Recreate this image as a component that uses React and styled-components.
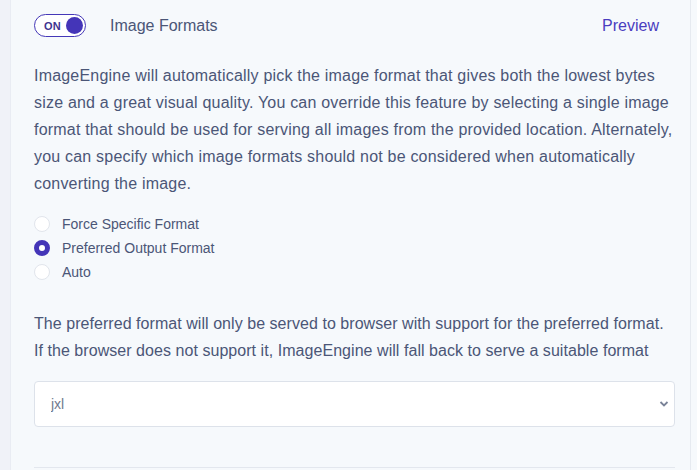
import React, { useState } from 'react';
import styled, { createGlobalStyle } from 'styled-components';

const GlobalStyle = createGlobalStyle`
  html, body {
    margin: 0;
    padding: 0;
    background: #f6f9fc;
    font-family: "Helvetica Neue", "Liberation Sans", Arial, sans-serif;
    -webkit-font-smoothing: antialiased;
  }
`;

const Page = styled.div`
  display: flex;
  min-height: 470px;
  background: #f6f9fc;
`;

const Rail = styled.div`
  width: 10px;
  flex-shrink: 0;
  background: #f0f2f8;
  border-right: 1px solid #e9ecf3;
`;

const Panel = styled.div`
  width: 680px;
  flex-shrink: 0;
  box-sizing: border-box;
  padding: 14px 15px 0 23px;
  border-right: 1px solid #e6eaf0;
  background: #f6f9fc;
`;

const Header = styled.div`
  display: flex;
  align-items: center;
  height: 23px;
`;

const Toggle = styled.button`
  display: flex;
  align-items: center;
  justify-content: space-between;
  box-sizing: border-box;
  width: 52px;
  height: 23px;
  padding: 0 2px 0 9px;
  border: 1.5px solid #4538b8;
  border-radius: 12px;
  background: #ffffff;
  cursor: pointer;
`;

const ToggleLabel = styled.span`
  font-size: 11px;
  font-weight: 700;
  color: #3d3490;
  letter-spacing: 0.2px;
`;

const Knob = styled.span`
  width: 17px;
  height: 17px;
  border-radius: 50%;
  background: #4435b8;
`;

const Title = styled.span`
  margin-left: 24px;
  font-size: 16px;
  color: #4b5677;
`;

const PreviewLink = styled.a`
  margin-left: auto;
  margin-right: 16px;
  font-size: 16px;
  color: #4a3dbf;
  text-decoration: none;
  cursor: pointer;
`;

const Paragraph = styled.p`
  margin: ${(p) => p.$top || 0}px 0 0 0;
  font-size: 16px;
  line-height: 27px;
  letter-spacing: ${(p) => p.$spacing ?? 0.2}px;
  color: #4b5677;
  white-space: nowrap;
`;

const RadioGroup = styled.div`
  display: flex;
  flex-direction: column;
  gap: 8px;
  margin-top: 19.5px;
`;

const RadioRow = styled.label`
  display: flex;
  align-items: center;
  gap: 12px;
  height: 16px;
  font-size: 14px;
  color: #4b5677;
  cursor: pointer;
`;

const RadioDot = styled.span`
  box-sizing: border-box;
  width: 16px;
  height: 16px;
  border-radius: 50%;
  background: #ffffff;
  border: ${(p) => (p.$checked ? '5px solid #4435b8' : '1px solid #e1e5ec')};
`;

const SelectWrap = styled.div`
  position: relative;
  margin-top: 17.5px;
`;

const Select = styled.select`
  appearance: none;
  width: 100%;
  height: 46px;
  box-sizing: border-box;
  padding: 0 30px 0 16px;
  border: 1px solid #dde2ea;
  border-radius: 4px;
  background: #ffffff;
  font-family: "Helvetica Neue", "Liberation Sans", Arial, sans-serif;
  font-size: 14px;
  color: #707a8e;
  outline: none;
`;

const Chevron = styled.svg`
  position: absolute;
  right: 6px;
  top: 19px;
  pointer-events: none;
`;

const Divider = styled.hr`
  margin: 40px 0 0 0;
  border: none;
  border-top: 1px solid #e3e7ee;
`;

const options = ['Force Specific Format', 'Preferred Output Format', 'Auto'];

export default function App() {
  const [selected, setSelected] = useState(1);
  return (
    <>
      <GlobalStyle />
      <Page>
        <Rail />
        <Panel>
          <Header>
            <Toggle>
              <ToggleLabel>ON</ToggleLabel>
              <Knob />
            </Toggle>
            <Title>Image Formats</Title>
            <PreviewLink>Preview</PreviewLink>
          </Header>
          <Paragraph $top={24.5}>
            ImageEngine will automatically pick the image format that gives both the lowest bytes
            <br />
            size and a great visual quality. You can override this feature by selecting a single image
            <br />
            format that should be used for serving all images from the provided location. Alternately,
            <br />
            you can specify which image formats should not be considered when automatically
            <br />
            converting the image.
          </Paragraph>
          <RadioGroup>
            {options.map((o, i) => (
              <RadioRow key={o} onClick={() => setSelected(i)}>
                <RadioDot $checked={selected === i} />
                {o}
              </RadioRow>
            ))}
          </RadioGroup>
          <Paragraph $top={29.5} $spacing={0.05}>
            The preferred format will only be served to browser with support for the preferred format.
            <br />
            If the browser does not support it, ImageEngine will fall back to serve a suitable format
          </Paragraph>
          <SelectWrap>
            <Select defaultValue="jxl">
              <option value="jxl">jxl</option>
              <option value="webp">webp</option>
              <option value="avif">avif</option>
            </Select>
            <Chevron width="10" height="8" viewBox="0 0 10 8">
              <path d="M1.5 2 L5 5.5 L8.5 2" fill="none" stroke="#7a8398" strokeWidth="1.8" />
            </Chevron>
          </SelectWrap>
          <Divider />
        </Panel>
      </Page>
    </>
  );
}
